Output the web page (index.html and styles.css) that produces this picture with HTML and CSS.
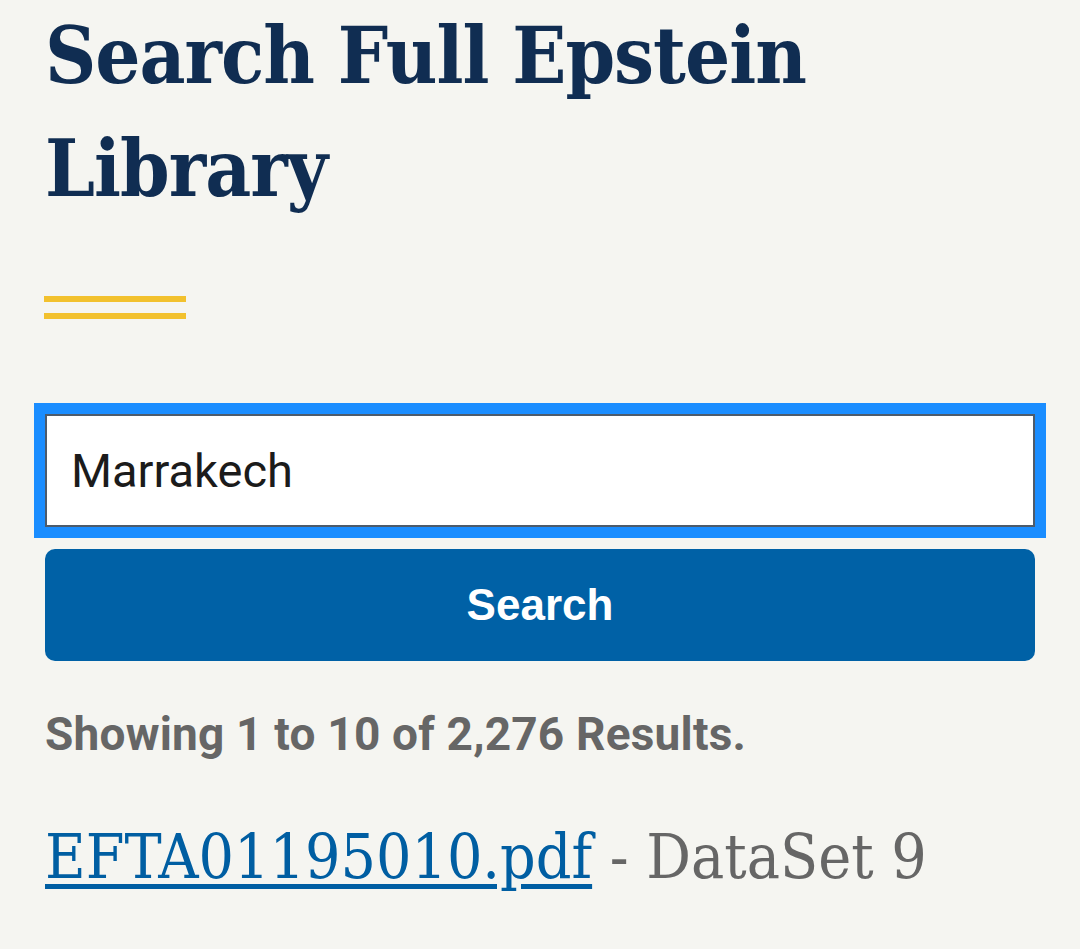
FILE: index.html
```html
<!DOCTYPE html>
<html lang="en">
<head>
<meta charset="utf-8">
<title>Search Full Epstein Library</title>
<link rel="stylesheet" href="styles.css">
</head>
<body>
<main class="page">
  <h1 class="title">Search Full Epstein Library</h1>
  <div class="rule"></div>
  <form class="search">
    <div class="field">Marrakech</div>
    <button class="btn" type="button">Search</button>
  </form>
  <p class="count">Showing 1 to 10 of 2,276 Results.</p>
  <p class="result"><a class="doc" href="#">EFTA01195010.pdf</a> - DataSet 9</p>
</main>
</body>
</html>
```
FILE: styles.css
```css
html, body {
  margin: 0;
  padding: 0;
  background: #f5f5f1;
}
.page {
  padding: 0 45px;
  display: flex;
  flex-direction: column;
}
.title {
  margin: -1px 0 0 0;
  font-family: "DejaVu Serif", serif;
  font-stretch: condensed;
  font-weight: bold;
  font-size: 79px;
  line-height: 113px;
  color: #102d52;
  letter-spacing: -1px;
}
.rule {
  margin-top: 71px;
  margin-left: -1px;
  width: 142px;
  height: 23px;
  box-sizing: border-box;
  border-top: 6px solid #f2c12e;
  border-bottom: 6px solid #f2c12e;
}
.search {
  margin-top: 95px;
  display: flex;
  flex-direction: column;
  gap: 22px;
}
.field {
  height: 113px;
  box-sizing: border-box;
  background: #fff;
  border: 2px solid #4d5b6b;
  outline: 11px solid #1a8dff;
  display: flex;
  align-items: center;
  padding-left: 24px;
  font-family: Roboto, sans-serif;
  font-size: 47px;
  color: #1b1b1b;
}
.btn {
  height: 112px;
  border: none;
  border-radius: 10px;
  background: #0061a6;
  color: #fff;
  font-family: "Liberation Sans", Arial, sans-serif;
  font-weight: bold;
  font-size: 44px;
  padding: 0;
}
.count {
  margin: 43px 0 0 0;
  font-family: Roboto, sans-serif;
  font-weight: bold;
  font-size: 46px;
  line-height: 60px;
  letter-spacing: 0.2px;
  color: #666666;
}
.result {
  margin: 53px 0 0 0;
  font-family: "DejaVu Serif", serif;
  font-stretch: condensed;
  font-size: 62px;
  line-height: 80px;
  color: #666666;
}
.doc {
  color: #005ea2;
  text-decoration: underline;
  text-decoration-thickness: 5px;
  text-underline-offset: 6px;
}
```
